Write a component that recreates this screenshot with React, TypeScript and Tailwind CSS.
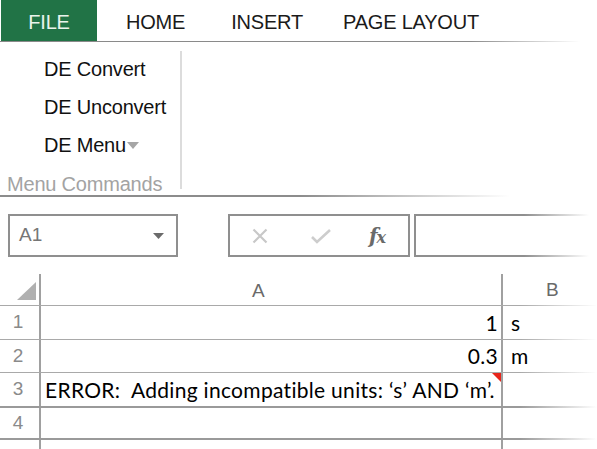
const sans = "font-['Liberation_Sans',Arial,sans-serif]";
const cellFont = "font-['Lato','Open_Sans',sans-serif]";

function Tabs() {
  const tabs = ['HOME', 'INSERT', 'PAGE LAYOUT'];
  return (
    <div>
      <div className={`flex h-[41px] items-stretch text-[20px] tracking-[-0.2px] text-[#1a1a1a] ${sans}`}>
        <div className="ml-[1px] flex w-[96px] items-center justify-center bg-[#217346] pt-[2px] text-[#eaf3ec]">FILE</div>
        <div className="flex items-center pt-[2px]">
          {tabs.map((t, i) => (
            <span key={t} className={i === 0 ? 'ml-[29px]' : i === 1 ? 'ml-[46px]' : 'ml-[40px]'}>
              {t}
            </span>
          ))}
        </div>
      </div>
      <div className="h-[1px] bg-[linear-gradient(to_right,#8a8a8a_0,#8a8a8a_470px,transparent_580px)]" />
    </div>
  );
}

function Ribbon() {
  return (
    <div className={`text-[20px] tracking-[-0.2px] ${sans}`}>
      <div className="flex h-[153px]">
        <div className="flex w-[180px] flex-col">
          <div className="flex flex-col pl-[44px] pt-[8px] leading-[38px] text-[#111]">
            <span>DE Convert</span>
            <span>DE Unconvert</span>
            <span className="flex items-center">
              DE Menu
              <svg width="12" height="8" viewBox="0 0 12 8" className="ml-[1px] mt-[2px]">
                <path d="M0 0h12L6 7z" fill="#a6a6a6" />
              </svg>
            </span>
          </div>
          <div className="pl-[7px] pt-[5px] text-[#a3a3a3]">Menu Commands</div>
        </div>
        <div className="mt-[9px] h-[138px] w-[2px] bg-[#dcdcdc]" />
      </div>
      <div className="h-[2px] bg-[linear-gradient(to_right,#8c8c8c_0,#8c8c8c_300px,transparent_510px)]" />
    </div>
  );
}

function FormulaBar() {
  return (
    <div className="mt-[17px] flex h-[43px] items-stretch">
      <div className={`ml-[8px] flex w-[170px] items-center justify-between border-2 border-[#8f8f8f] pl-[9px] pr-[12px] text-[19px] text-[#767676] ${sans}`}>
        <span>A1</span>
        <svg width="11" height="6" viewBox="0 0 11 6">
          <path d="M0 0h11L5.5 6z" fill="#6b6b6b" />
        </svg>
      </div>
      <div className="ml-[50px] flex w-[182px] items-center border-2 border-[#8f8f8f]">
        <svg width="16" height="16" viewBox="0 0 16 16" className="ml-[22px]">
          <path d="M1.5 1.5l13 13M14.5 1.5l-13 13" stroke="#c8c8c8" strokeWidth="2.2" />
        </svg>
        <svg width="20" height="16" viewBox="0 0 20 16" className="ml-[43px]">
          <path d="M1 9l5 5L19 2" fill="none" stroke="#cdcdcd" strokeWidth="2.6" />
        </svg>
        <span className="ml-[38px] font-['DejaVu_Serif',serif] text-[20px] font-bold italic tracking-[-1px] text-[#6a6a6a]">
          f<span className="text-[16px]">x</span>
        </span>
      </div>
      <div className="ml-[4px] w-[180px] bg-[linear-gradient(to_right,#8f8f8f_0,#8f8f8f_110px,transparent_175px)] py-[2px] pl-[2px]">
        <div className="h-full bg-white" />
      </div>
    </div>
  );
}

const fade = 'bg-[linear-gradient(to_right,#a9a9a9_0,#a9a9a9_520px,transparent_597px)]';
const fadeDark = 'bg-[linear-gradient(to_right,#9a9a9a_0,#9a9a9a_520px,transparent_597px)]';

type Row = { n: string; a?: string; b?: string; err?: boolean; h: string; line: string };

function Grid() {
  const rows: Row[] = [
    { n: '1', a: '1', b: 's', h: 'h-[33px]', line: `h-[1px] ${fade}` },
    { n: '2', a: '0.3', b: 'm', h: 'h-[32px]', line: `h-[1px] ${fade}` },
    { n: '3', err: true, h: 'h-[33px]', line: `h-[2px] ${fadeDark}` },
    { n: '4', h: 'h-[30px]', line: `h-[2px] ${fadeDark}` },
  ];
  return (
    <div className="mt-[17px]">
      <div className="flex h-[31px]">
        <div className="flex w-[41px] items-end border-r-2 border-[#a0a0a0] pb-[5px] pl-[17px]">
          <svg width="19" height="18" viewBox="0 0 19 18">
            <path d="M19 0v18H0z" fill="#b0b0b0" />
          </svg>
        </div>
        <div className={`flex w-[462px] items-center border-r-2 border-[#a0a0a0] pl-[211px] pt-[3px] text-[19px] text-[#6a6a6a] ${sans}`}>
          A
        </div>
        <div className={`flex flex-1 items-center pl-[43px] pt-[1px] text-[19px] text-[#6a6a6a] ${sans}`}>B</div>
      </div>
      <div className={`h-[1px] ${fade}`} />
      {rows.map((r) => (
        <div key={r.n}>
          <div className={`flex ${r.h}`}>
            <div className={`flex w-[41px] items-center justify-center border-r-2 border-[#a0a0a0] pr-[3px] text-[19px] text-[#8a8a8a] ${sans}`}>
              {r.n}
            </div>
            <div className={`relative flex w-[462px] items-center border-r-2 border-[#a0a0a0] text-[21px] tracking-[0.3px] text-black ${cellFont}`}>
              {r.err ? (
                <>
                  <span className="pl-[4px] whitespace-pre">ERROR:  Adding incompatible units: ‘s’ AND ‘m’.</span>
                  <svg width="9" height="9" viewBox="0 0 9 9" className="absolute right-0 top-0">
                    <path d="M0 0h9v9z" fill="#e8261b" />
                  </svg>
                </>
              ) : (
                <span className="w-full pr-[3px] text-right">{r.a}</span>
              )}
            </div>
            <div className={`flex flex-1 items-center pl-[8px] text-[21px] text-black ${cellFont}`}>{r.b}</div>
          </div>
          <div className={r.line} />
        </div>
      ))}
      <div className="flex h-[12px]">
        <div className="w-[41px] border-r-2 border-[#a0a0a0]" />
        <div className="w-[462px] border-r-2 border-[#a0a0a0]" />
      </div>
    </div>
  );
}

export default function App() {
  return (
    <div className="h-[449px] w-[597px] overflow-hidden bg-white">
      <Tabs />
      <Ribbon />
      <FormulaBar />
      <Grid />
    </div>
  );
}
